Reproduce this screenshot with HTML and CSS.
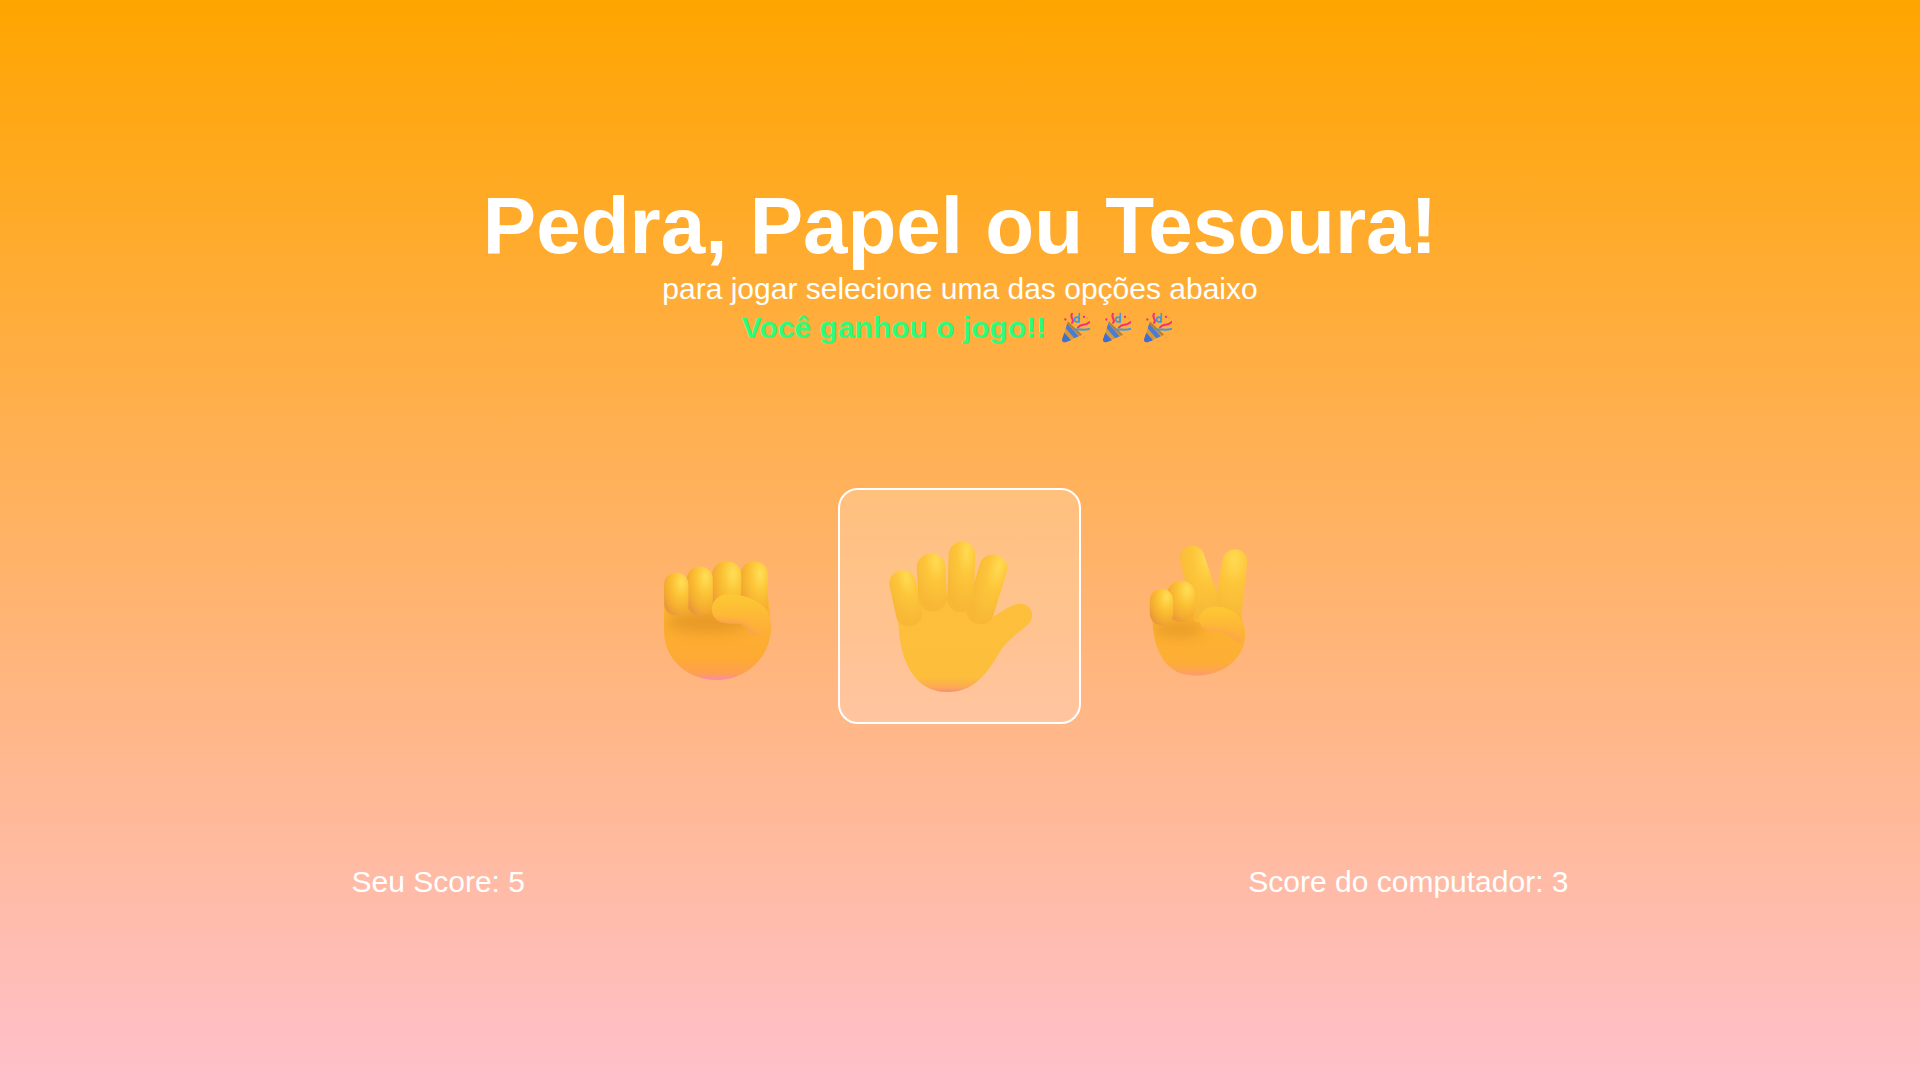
FILE: index.html
```html
<!DOCTYPE html>
<html lang="pt-BR">
<head>
<meta charset="UTF-8">
<meta name="viewport" content="width=device-width, initial-scale=1.0">
<title>Pedra, Papel ou Tesoura!</title>
<link rel="stylesheet" href="styles.css">
</head>
<body>

<svg class="defs" width="0" height="0" aria-hidden="true">
    <defs>
        <radialGradient id="fingerGrad" cx="0.72" cy="0.22" r="0.85">
            <stop offset="0" stop-color="#ffdf58"/>
            <stop offset="0.4" stop-color="#fcc436"/>
            <stop offset="0.8" stop-color="#f4ab2f"/>
            <stop offset="1" stop-color="#e89a3a"/>
        </radialGradient>
        <radialGradient id="openGrad" cx="0.68" cy="0.14" r="0.8">
            <stop offset="0" stop-color="#ffdb52"/>
            <stop offset="0.45" stop-color="#fdc53a"/>
            <stop offset="1" stop-color="#f8b836"/>
        </radialGradient>
        <linearGradient id="fistGrad" x1="0" y1="0" x2="0" y2="1">
            <stop offset="0" stop-color="#fdb52e"/>
            <stop offset="0.72" stop-color="#fdaa33"/>
            <stop offset="0.92" stop-color="#fda04f"/>
            <stop offset="1" stop-color="#fb8ab0"/>
        </linearGradient>
        <linearGradient id="peaceGrad" x1="0" y1="0" x2="0" y2="1">
            <stop offset="0" stop-color="#fdb52e"/>
            <stop offset="0.8" stop-color="#fdae35"/>
            <stop offset="0.95" stop-color="#fda256"/>
            <stop offset="1" stop-color="#fb9a80"/>
        </linearGradient>
        <linearGradient id="palmGrad" x1="0" y1="0" x2="0" y2="1">
            <stop offset="0" stop-color="#fdc03c"/>
            <stop offset="0.86" stop-color="#fdbe3b"/>
            <stop offset="0.96" stop-color="#fba854"/>
            <stop offset="1" stop-color="#f58d7a"/>
        </linearGradient>
        <linearGradient id="thumbGrad" x1="0" y1="0" x2="0" y2="1">
            <stop offset="0" stop-color="#fdc933"/>
            <stop offset="0.6" stop-color="#fdb637"/>
            <stop offset="1" stop-color="#fdac38"/>
        </linearGradient>
        <filter id="soft" x="-50%" y="-100%" width="200%" height="300%">
            <feGaussianBlur stdDeviation="20"/>
        </filter>
        <filter id="edge" x="-20%" y="-40%" width="140%" height="180%">
            <feGaussianBlur stdDeviation="9"/>
        </filter>
        <clipPath id="fistClip">
            <path d="M75 250 L75 335 C75 410 140 478 232 478 C320 478 395 410 395 320 L388 240 Z"/>
        </clipPath>
        <clipPath id="fistThumb">
            <path d="M265 222 C330 218 395 255 392 305 C392 330 375 347 352 346 C330 345 325 320 305 310 L265 308 C235 308 218 290 218 265 C218 240 240 222 265 222 Z"/>
        </clipPath>
        <clipPath id="peaceClip">
            <path d="M97 295 C100 400 140 470 225 470 C320 470 378 410 375 345 L360 260 L200 285 Z"/>
        </clipPath>
        <clipPath id="peaceThumb">
            <path d="M285 263 C340 262 378 300 376 345 C374 370 355 375 340 360 C325 340 300 338 280 338 C255 338 238 320 238 300 C238 280 258 263 285 263 Z"/>
        </clipPath>
        <symbol id="popper" viewBox="0 0 84 92">
            <path d="M0 82 L18 28 L60 68 L10 90 Q0 92 0 82 Z" fill="#d59a3a"/>
            <path d="M0 82 L7 62 L27 84 L10 90 Q0 92 0 82 Z" fill="#3f6fd0"/>
            <path d="M11 48 L16 34 L50 72 L37 78 Z" fill="#4a7bd6"/>
            <path d="M18 28 L60 68 L54 71 L16 34 Z" fill="#b97f34"/>
            <path d="M30 32 C40 22 22 18 30 5" fill="none" stroke="#f0307c" stroke-width="6" stroke-linecap="round"/>
            <path d="M48 46 C58 32 68 44 82 30" fill="none" stroke="#f0307c" stroke-width="6" stroke-linecap="round"/>
            <circle cx="45" cy="22" r="7" fill="none" stroke="#3f9be0" stroke-width="5"/>
            <path d="M52 4 L51 30" fill="none" stroke="#3f9be0" stroke-width="5" stroke-linecap="round"/>
            <path d="M38 52 C54 50 64 56 82 50" fill="none" stroke="#3f9be0" stroke-width="6" stroke-linecap="round"/>
            <circle cx="10" cy="22" r="3.5" fill="#f0307c"/>
            <circle cx="66" cy="14" r="3.5" fill="#f0307c"/>
            <circle cx="76" cy="18" r="3" fill="#f0a030"/>
            <circle cx="66" cy="76" r="3" fill="#d8a850"/>
        </symbol>
    </defs>
</svg>

<div class="game">
    <header class="intro">
        <h1>Pedra, Papel ou Tesoura!</h1>
        <p class="hint">para jogar selecione uma das opções abaixo</p>
        <p class="result">Você ganhou o jogo!!
            <svg class="party"><use href="#popper"/></svg>
            <svg class="party"><use href="#popper"/></svg>
            <svg class="party"><use href="#popper"/></svg>
        </p>
    </header>

    <div class="choices">
        <button class="choice" aria-label="Pedra">
            <svg class="hand" viewBox="66 -22 350 560" width="117" height="187">
                <path d="M75 250 L75 335 C75 410 140 478 232 478 C320 478 395 410 395 320 L388 240 Z" fill="url(#fistGrad)"/>
                <g clip-path="url(#fistClip)">
                    <ellipse cx="205" cy="305" rx="125" ry="30" fill="#c9791f" opacity="0.45" filter="url(#soft)"/>
                </g>
                <rect x="303" y="123" width="83" height="170" rx="40" fill="url(#fingerGrad)"/>
                <rect x="219" y="123" width="87" height="170" rx="40" fill="url(#fingerGrad)"/>
                <rect x="143" y="138" width="78" height="147" rx="38" fill="url(#fingerGrad)"/>
                <rect x="75" y="157" width="73" height="128" rx="35" fill="url(#fingerGrad)"/>
                <path d="M265 222 C330 218 395 255 392 305 C392 330 375 347 352 346 C330 345 325 320 305 310 L265 308 C235 308 218 290 218 265 C218 240 240 222 265 222 Z" fill="url(#thumbGrad)"/>
                <g clip-path="url(#fistThumb)">
                    <path d="M222 300 C240 316 290 312 305 314 C325 324 330 349 352 350" fill="none" stroke="#fb9a5a" stroke-width="16" filter="url(#edge)"/>
                </g>
            </svg>
        </button>
        <button class="choice selected" aria-label="Papel">
            <svg class="hand" viewBox="163 118 450 520" width="150" height="173">
                <path d="M180 320 C190 370 203 410 204 450 C210 530 245 635 350 635 C430 635 470 580 510 510 C530 480 560 460 590 435 C612 415 608 385 585 373 C560 362 530 380 480 415 L490 345 L250 345 Z" fill="url(#palmGrad)"/>
                <rect x="175" y="270" width="80" height="170" rx="38" fill="url(#openGrad)" transform="rotate(-12 213 305)"/>
                <rect x="258" y="219" width="86" height="174" rx="41" fill="url(#openGrad)" transform="rotate(-3 300 260)"/>
                <rect x="446" y="222" width="84" height="215" rx="41" fill="url(#openGrad)" transform="rotate(17 488 262)"/>
                <rect x="354" y="183" width="80" height="212" rx="40" fill="url(#openGrad)" transform="rotate(2 395 222)"/>
            </svg>
        </button>
        <button class="choice" aria-label="Tesoura">
            <svg class="hand" viewBox="67 -39 350 600" width="117" height="200">
                <path d="M97 295 C100 400 140 470 225 470 C320 470 378 410 375 345 L360 260 L200 285 Z" fill="url(#peaceGrad)"/>
                <g clip-path="url(#peaceClip)">
                    <ellipse cx="175" cy="330" rx="80" ry="22" fill="#c9791f" opacity="0.4" filter="url(#soft)"/>
                </g>
                <path d="M308 125 A37 37 0 0 1 382 130 L362 310 L262 310 L290 218 Z" fill="url(#openGrad)"/>
                <path d="M180 118 A37 37 0 0 1 250 100 L290 218 L300 310 L225 310 Z" fill="url(#openGrad)"/>
                <rect x="143" y="185" width="82" height="124" rx="40" fill="url(#fingerGrad)"/>
                <rect x="90" y="210" width="70" height="108" rx="34" fill="url(#fingerGrad)"/>
                <path d="M285 263 C340 262 378 300 376 345 C374 370 355 375 340 360 C325 340 300 338 280 338 C255 338 238 320 238 300 C238 280 258 263 285 263 Z" fill="url(#thumbGrad)"/>
                <g clip-path="url(#peaceThumb)">
                    <path d="M240 330 C260 345 300 340 325 350 C340 360 350 377 365 370" fill="none" stroke="#fba05a" stroke-width="14" filter="url(#edge)"/>
                </g>
            </svg>
        </button>
    </div>

    <footer class="scores">
        <span>Seu Score: 5</span>
        <span>Score do computador: 3</span>
    </footer>
</div>

</body>
</html>
```

FILE: styles.css
```css
* {
    box-sizing: border-box;
}
body {
    margin: 0;
    height: 100vh;
    overflow: hidden;
    background: linear-gradient(to bottom, #ffa500, #ffc0cb);
    color: #fff;
    font-family: "Liberation Sans", Arial, sans-serif;
}
.defs {
    position: absolute;
}
.game {
    display: flex;
    flex-direction: column;
    align-items: center;
    padding-top: 180px;
}
.intro {
    text-align: center;
}
h1 {
    margin: 0;
    font-size: 80px;
    line-height: 92px;
    font-weight: bold;
}
.hint {
    margin: 0;
    font-size: 30px;
    line-height: 34px;
}
.result {
    display: flex;
    align-items: center;
    justify-content: center;
    margin: 3px 0 0;
    padding-right: 6px;
    height: 37px;
    font-size: 30px;
    font-weight: bold;
    color: #2dfb7b;
}
.party {
    width: 28px;
    height: 31px;
    margin-left: 13px;
}
.party:first-of-type {
    margin-left: 16px;
}
.choices {
    display: flex;
    justify-content: center;
    margin-top: 142px;
    padding-right: 1px;
}
.choice {
    display: flex;
    align-items: center;
    justify-content: center;
    width: 238px;
    height: 236px;
    padding: 0;
    border: 2px solid transparent;
    border-radius: 20px;
    background: none;
}
.selected {
    width: 243px;
    border-color: #fff;
    background: rgba(255, 255, 255, 0.2);
}
.scores {
    display: flex;
    justify-content: space-between;
    width: 1217px;
    margin-top: 141px;
    font-size: 30px;
    line-height: 34px;
}
```
